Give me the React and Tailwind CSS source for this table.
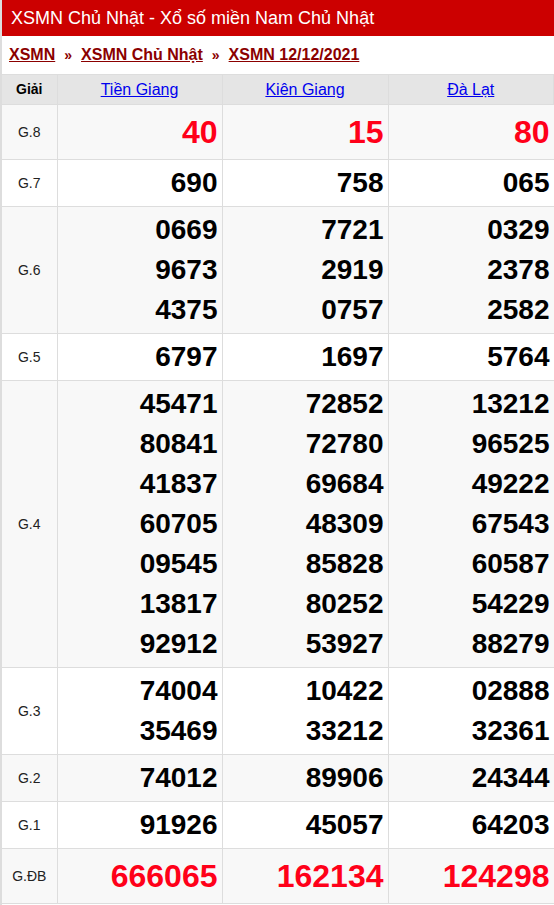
import React from 'react'

const provinces = ['Tiền Giang', 'Kiên Giang', 'Đà Lạt']

const rows = [
  { label: 'G.8', big: true, values: [['40'], ['15'], ['80']] },
  { label: 'G.7', values: [['690'], ['758'], ['065']] },
  { label: 'G.6', values: [['0669', '9673', '4375'], ['7721', '2919', '0757'], ['0329', '2378', '2582']] },
  { label: 'G.5', values: [['6797'], ['1697'], ['5764']] },
  {
    label: 'G.4',
    values: [
      ['45471', '80841', '41837', '60705', '09545', '13817', '92912'],
      ['72852', '72780', '69684', '48309', '85828', '80252', '53927'],
      ['13212', '96525', '49222', '67543', '60587', '54229', '88279']
    ]
  },
  { label: 'G.3', values: [['74004', '35469'], ['10422', '33212'], ['02888', '32361']] },
  { label: 'G.2', values: [['74012'], ['89906'], ['24344']] },
  { label: 'G.1', values: [['91926'], ['45057'], ['64203']] },
  { label: 'G.ĐB', big: true, values: [['666065'], ['162134'], ['124298']] }
]

const App = () => {
  return (
    <div className="w-[554px] min-h-[905px] bg-white border-l-2 border-[#dddddd] font-['Liberation_Sans',Arial,sans-serif]">
      {/* Title bar */}
      <div className="h-[36px] bg-[#cc0000] text-white text-[18px] flex items-center pl-[9px]">
        XSMN Chủ Nhật - Xổ số miền Nam Chủ Nhật
      </div>

      {/* Breadcrumb */}
      <div className="h-[38px] flex items-center pl-[7px] text-[16px] font-bold">
        <a href="#" className="text-[#8b0000] underline">XSMN</a>
        <span className="mx-[9px] text-[#8b0000] text-[14px]">»</span>
        <a href="#" className="text-[#8b0000] underline">XSMN Chủ Nhật</a>
        <span className="mx-[9px] text-[#8b0000] text-[14px]">»</span>
        <a href="#" className="text-[#8b0000] underline">XSMN 12/12/2021</a>
      </div>

      {/* Results table */}
      <table className="w-full border-collapse table-fixed">
        <colgroup>
          <col className="w-[55px]" />
          <col className="w-[165px]" />
          <col className="w-[166px]" />
          <col />
        </colgroup>
        <thead>
          <tr className="bg-[#e5e5e5] h-[30px]">
            <th className="border border-[#dddddd] border-l-0 text-[14px] font-bold text-black">Giải</th>
            {provinces.map((p) => (
              <th key={p} className="border border-[#dddddd] text-[16px] font-normal">
                <a href="#" className="text-[#0000ee] underline">{p}</a>
              </th>
            ))}
          </tr>
        </thead>
        <tbody>
          {rows.map((row, i) => (
            <tr key={row.label} className={i % 2 === 0 ? 'bg-[#f8f8f8]' : 'bg-white'}>
              <td className="border border-[#dddddd] border-l-0 text-center text-[14px] text-[#222222]">
                {row.label}
              </td>
              {row.values.map((nums, j) => (
                <td key={j} className="border border-[#dddddd] border-r-0 text-right pr-[4px] py-[3px] align-middle">
                  {nums.map((n) => (
                    <div
                      key={n}
                      className={
                        row.big
                          ? 'h-[48px] leading-[48px] text-[32px] font-bold text-[#ff0019]'
                          : 'h-[40px] leading-[40px] text-[28px] font-bold text-black'
                      }
                    >
                      {n}
                    </div>
                  ))}
                </td>
              ))}
            </tr>
          ))}
        </tbody>
      </table>
    </div>
  )
}

export default App
